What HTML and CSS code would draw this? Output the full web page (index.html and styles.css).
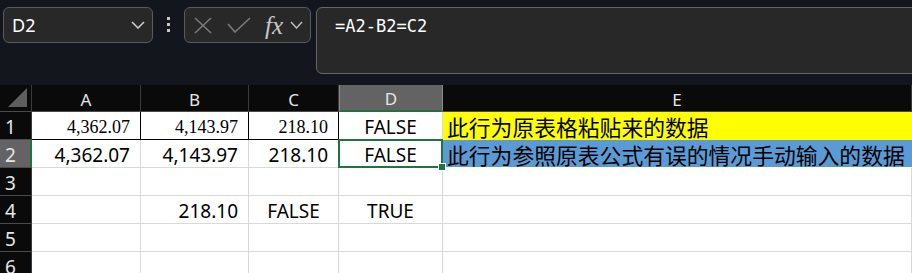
FILE: index.html
```html
<!DOCTYPE html>
<html>
<head>
    <meta charset="utf-8">
    <title>Sheet</title>
    <link rel="stylesheet" href="styles.css">
</head>
<body>
    <div class="toolbar">
        <div class="namebox">
            <span class="name">D2</span>
            <svg class="chev" width="14" height="8" viewBox="0 0 14 8"><polyline points="1,1 7,7 13,1" fill="none" stroke="#d0d0d0" stroke-width="1.5"/></svg>
        </div>
        <div class="dots"><i></i><i></i><i></i></div>
        <div class="fxbox">
            <svg width="18" height="17" viewBox="0 0 18 17"><path d="M1 1 L17 16 M17 1 L1 16" stroke="#7a7a7a" stroke-width="1.6" fill="none"/></svg>
            <svg class="check" width="24" height="16" viewBox="0 0 24 16"><polyline points="1,7 8,15 23,1" fill="none" stroke="#7a7a7a" stroke-width="1.6"/></svg>
            <span class="fx">fx</span>
            <svg width="13" height="8" viewBox="0 0 13 8"><polyline points="1,1 6.5,7 12,1" fill="none" stroke="#c0c0c0" stroke-width="1.4"/></svg>
        </div>
        <div class="formula">=A2-B2=C2</div>
    </div>

    <div class="sheet">
        <div class="corner"><span></span></div>
        <div class="colhead">A</div>
        <div class="colhead">B</div>
        <div class="colhead">C</div>
        <div class="colhead active">D</div>
        <div class="colhead">E</div>

        <div class="rowhead">1</div>
        <div class="cell num serif boxed">4,362.07</div>
        <div class="cell num serif boxed">4,143.97</div>
        <div class="cell num serif boxed">218.10</div>
        <div class="cell mid bottom-dark">FALSE</div>
        <div class="cell note yellow">此行为原表格粘贴来的数据</div>

        <div class="rowhead active">2</div>
        <div class="cell num">4,362.07</div>
        <div class="cell num">4,143.97</div>
        <div class="cell num">218.10</div>
        <div class="cell mid selected">FALSE<span class="handle"></span></div>
        <div class="cell note blue">此行为参照原表公式有误的情况手动输入的数据</div>

        <div class="rowhead">3</div>
        <div class="cell"></div>
        <div class="cell"></div>
        <div class="cell"></div>
        <div class="cell"></div>
        <div class="cell"></div>

        <div class="rowhead">4</div>
        <div class="cell"></div>
        <div class="cell num">218.10</div>
        <div class="cell mid">FALSE</div>
        <div class="cell mid">TRUE</div>
        <div class="cell"></div>

        <div class="rowhead">5</div>
        <div class="cell"></div>
        <div class="cell"></div>
        <div class="cell"></div>
        <div class="cell"></div>
        <div class="cell"></div>

        <div class="rowhead">6</div>
        <div class="cell"></div>
        <div class="cell"></div>
        <div class="cell"></div>
        <div class="cell"></div>
        <div class="cell"></div>
    </div>
</body>
</html>
```

FILE: styles.css
```css
html, body {
    margin: 0;
    padding: 0;
    background: #ffffff;
    overflow: hidden;
    font-family: "Noto Sans", "Noto Sans CJK SC", sans-serif;
}

.toolbar {
    height: 85px;
    box-sizing: border-box;
    padding: 7px 0 0 3px;
    background: #13161c;
    display: flex;
    align-items: flex-start;
    margin-right: -12px;
}
.namebox {
    width: 150px;
    height: 36px;
    box-sizing: border-box;
    border: 1px solid #5a5a5a;
    border-radius: 6px;
    background: #282828;
    display: flex;
    align-items: center;
    justify-content: space-between;
    padding: 0 7px 0 8px;
}
.name {
    color: #ffffff;
    font-size: 18px;
}
.dots {
    width: 31px;
    display: flex;
    flex-direction: column;
    align-items: center;
    gap: 3px;
    padding-top: 10px;
}
.dots i {
    display: block;
    width: 3px;
    height: 3px;
    background: #c8c8c8;
}
.fxbox {
    width: 127px;
    height: 36px;
    box-sizing: border-box;
    border: 1px solid #5a5a5a;
    border-radius: 6px;
    background: #282828;
    display: flex;
    align-items: center;
    padding: 0 0 0 9px;
    margin-right: 5px;
}
.fxbox .check {
    margin-left: 15px;
    margin-right: 14px;
}
.fx {
    font-family: "Liberation Serif", serif;
    font-style: italic;
    font-size: 25px;
    color: #c8c8c8;
    margin-right: 7px;
    line-height: 1;
}
.formula {
    flex: 1;
    height: 67px;
    box-sizing: border-box;
    border: 1px solid #666666;
    border-radius: 6px;
    background: #282828;
    color: #ffffff;
    font-family: "DejaVu Sans Mono", monospace;
    font-size: 17px;
    line-height: 20px;
    padding: 8px 0 0 18px;
}

.sheet {
    display: grid;
    grid-template-columns: 32px 109px 108px 90px 104px 1fr;
    grid-template-rows: 27px repeat(6, 28px);
}
.corner, .colhead, .rowhead {
    background: #0a0a0a;
    color: #e6e6e6;
    box-sizing: border-box;
    border-right: 1px solid #3a3a3a;
    border-bottom: 1px solid #4a4a4a;
}
.corner {
    position: relative;
}
.corner span {
    position: absolute;
    right: 4px;
    bottom: 4px;
    width: 0;
    height: 0;
    border-left: 19px solid transparent;
    border-bottom: 19px solid #5e5e5e;
}
.colhead {
    font-size: 17px;
    line-height: 22px;
    display: flex;
    align-items: center;
    justify-content: center;
    padding-top: 3px;
}
.colhead:last-child {
    border-right: 2px solid #555555;
}
.colhead.active {
    background: #636363;
    border-bottom: 2px solid #1f7244;
    border-right-color: #8a8a8a;
    border-left: 1px solid #8a8a8a;
}
.rowhead {
    font-size: 19px;
    line-height: 24px;
    display: flex;
    align-items: center;
    padding: 2px 0 0 5px;
}
.rowhead.active {
    background: #636363;
    border-right: 2px solid #1f7244;
}

.cell {
    box-sizing: border-box;
    border-right: 1px solid #d9d9d9;
    border-bottom: 1px solid #d9d9d9;
    color: #000000;
    font-size: 19px;
    line-height: 24px;
    display: flex;
    align-items: center;
    white-space: nowrap;
    padding-top: 2px;
}
.num {
    justify-content: flex-end;
    padding-right: 10px;
}
.mid {
    justify-content: center;
}
.serif {
    font-family: "Liberation Serif", serif;
    font-size: 18px;
}
.boxed {
    border-right: 1px solid #000000;
    border-bottom: 1px solid #000000;
}
.bottom-dark {
    border-bottom: 1px solid #000000;
}
.note {
    font-family: "Noto Sans CJK SC", sans-serif;
    font-size: 21.8px;
    line-height: 26px;
    padding-left: 4px;
    border-right: none;
    overflow: hidden;
}
.yellow {
    background: #ffff00;
    border-bottom: none;
}
.blue {
    background: #5b9bd5;
    border-bottom: 1px solid #ffffff;
}
.selected {
    position: relative;
}
.selected::after {
    content: "";
    position: absolute;
    left: -1px;
    top: -1px;
    right: -1px;
    bottom: -1px;
    border: 2px solid #1f7244;
}
.handle {
    position: absolute;
    right: -4px;
    bottom: -4px;
    width: 6px;
    height: 6px;
    background: #1f7244;
    border: 1px solid #ffffff;
    z-index: 2;
}
```
